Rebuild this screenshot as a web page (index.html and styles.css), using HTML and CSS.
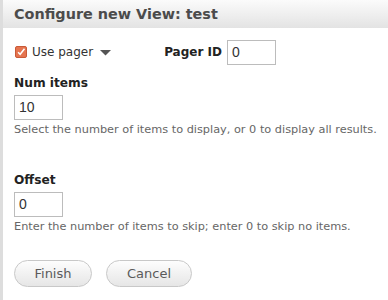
FILE: index.html
```html
<!DOCTYPE html>
<html>
<head>
<meta charset="utf-8">
<link rel="stylesheet" href="styles.css">
</head>
<body>
<div class="dialog">
  <div class="header"><h1 class="title">Configure new View: test</h1></div>
  <div class="content">
    <div class="pager-row">
      <label class="use-pager">
        <span class="checkbox"><svg width="12" height="12" viewBox="0 0 12 12"><path d="M2.5 6.2 L5 8.8 L10.2 2.2" fill="none" stroke="#fff" stroke-width="1.8"/></svg></span>
        <span class="use-text">Use pager</span>
        <svg class="caret" width="11" height="6" viewBox="0 0 11 6"><path d="M0 0 H11 L5.5 5.5 Z" fill="#555"/></svg>
      </label>
      <label class="pager-id">Pager ID</label>
      <div class="input small">0</div>
    </div>
    <div class="field">
      <div class="label">Num items</div>
      <div class="input">10</div>
      <div class="help">Select the number of items to display, or 0 to display all results.</div>
    </div>
    <div class="field offset">
      <div class="label">Offset</div>
      <div class="input">0</div>
      <div class="help">Enter the number of items to skip; enter 0 to skip no items.</div>
    </div>
    <div class="buttons">
      <button class="btn finish">Finish</button>
      <button class="btn cancel">Cancel</button>
    </div>
  </div>
</div>
</body>
</html>
```
FILE: styles.css
```css
html, body { margin: 0; padding: 0; background: #fff; }
body { font-family: "DejaVu Sans", sans-serif; color: #333; }
.dialog { border-left: 3px solid #ddd; height: 300px; box-sizing: border-box; }
.header {
  height: 28px;
  background: linear-gradient(#fbfbfb, #e3e3e3);
  padding-left: 11px;
  display: flex;
  align-items: center;
}
.title { margin: 0; font-size: 14.4px; font-weight: bold; color: #4b4b4b; line-height: 18px; }
.content { padding: 12px 11px 0 11px; }
.pager-row { display: flex; align-items: center; height: 24px; }
.use-pager { display: flex; align-items: center; font-size: 12px; color: #333; }
.checkbox {
  width: 12px; height: 12px; border-radius: 2px;
  background: #e5744f; border: 1px solid #c95a38; box-sizing: border-box;
  display: flex; align-items: center; justify-content: center; margin-left: 1px;
}
.checkbox svg { width: 10px; height: 10px; }
.use-text { margin-left: 5px; }
.caret { margin-left: 7px; margin-top: 1px; }
.pager-id { font-size: 12px; font-weight: bold; color: #222; margin-left: 53px; margin-right: 5px; }
.input {
  width: 49px; height: 25px; box-sizing: border-box;
  border: 1px solid #bcbcbc; font-size: 14px; color: #333;
  padding: 2px 0 0 4px; line-height: 19px;
  font-family: "Liberation Sans", sans-serif;
}
.field { margin-top: 11px; }
.label { font-size: 12.2px; font-weight: bold; color: #222; line-height: 16px; margin-bottom: 4px; }
.help { font-size: 11.3px; color: #666; margin-top: 3px; line-height: 14px; }
.offset { margin-top: 35px; }
.buttons { display: flex; gap: 14px; margin-top: 26px; }
.btn {
  height: 27px; border: 1px solid #c8c8c8; border-radius: 14px;
  background: linear-gradient(#fdfdfd, #e6e6e6);
  font-family: "DejaVu Sans", sans-serif; font-size: 13px; color: #5a5a5a;
  padding: 0;
}
.finish { width: 78px; }
.cancel { width: 86px; }
```
